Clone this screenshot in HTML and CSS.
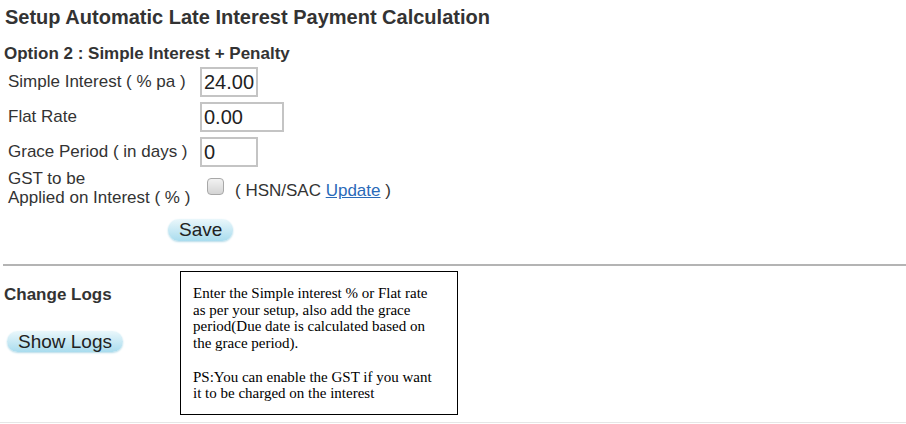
FILE: index.html
```html
<!DOCTYPE html>
<html lang="en">
<head>
    <meta charset="UTF-8">
    <title>Late Interest Setup</title>
    <link rel="stylesheet" href="styles.css">
</head>
<body>
    <div class="page">
        <h2 class="title">Setup Automatic Late Interest Payment Calculation</h2>

        <div class="option-block">
            <h3 class="option-title">Option 2 : Simple Interest + Penalty</h3>
            <div class="form-grid">
                <label class="field-label">Simple Interest ( % pa )</label>
                <div><input class="field small" type="text" value="24.00"></div>

                <label class="field-label">Flat Rate</label>
                <div><input class="field wide" type="text" value="0.00"></div>

                <label class="field-label">Grace Period ( in days )</label>
                <div><input class="field small" type="text" value="0"></div>

                <label class="field-label two-line">GST to be<br>Applied on Interest ( % )</label>
                <div class="gst-row">
                    <span class="check"></span>
                    <span class="hsn">( HSN/SAC <a href="#">Update</a> )</span>
                </div>
            </div>
            <div class="save-row">
                <button class="pill-btn save-btn">Save</button>
            </div>
        </div>

        <hr class="divider">

        <div class="logs">
            <div class="logs-left">
                <h3 class="logs-title">Change Logs</h3>
                <button class="pill-btn logs-btn">Show Logs</button>
            </div>
            <div class="help-box">
                <p>Enter the Simple interest % or Flat rate as per your setup, also add the grace period(Due date is calculated based on the grace period).</p>
                <p>PS:You can enable the GST if you want it to be charged on the interest</p>
            </div>
        </div>
        <div class="bottom-line"></div>
    </div>
</body>
</html>
```

FILE: styles.css
```css
body {
    margin: 0;
    background: #fff;
    color: #333;
    font-family: 'Liberation Sans', Arial, sans-serif;
}
.page {
    width: 906px;
}
.title {
    margin: 0;
    padding: 6px 0 0 5px;
    font-size: 20px;
    font-weight: bold;
    color: #333;
    line-height: 23px;
}
.option-block {
    padding: 15px 0 0 4px;
}
.option-title {
    margin: 0;
    font-size: 17px;
    font-weight: bold;
    line-height: 20px;
}
.form-grid {
    display: grid;
    grid-template-columns: 192px auto;
    row-gap: 5px;
    padding-left: 4px;
    margin-top: 3px;
    align-items: center;
}
.field-label {
    font-size: 17px;
}
.two-line {
    line-height: 19px;
    margin-top: -3px;
}
.field {
    display: block;
    font-family: 'Liberation Sans', Arial, sans-serif;
    font-size: 20px;
    color: #222;
    height: 30px;
    box-sizing: border-box;
    border: 2px solid #c4c4c4;
    padding: 1px 2px;
    margin: 0;
}
.small {
    width: 58px;
}
.wide {
    width: 84px;
}
.gst-row {
    display: flex;
    align-items: center;
    gap: 11px;
    padding-left: 7px;
    font-size: 17px;
}
.check {
    width: 17px;
    height: 17px;
    box-sizing: border-box;
    border: 1px solid #a8a8a8;
    border-radius: 4px;
    background: linear-gradient(#f2f2f2, #d4d4d4);
    margin-top: -7px;
}
.hsn {
    margin-top: 2px;
}
.hsn a {
    color: #2a6ab8;
}
.save-row {
    padding: 12px 0 0 164px;
}
.pill-btn {
    font-family: 'Liberation Sans', Arial, sans-serif;
    color: #222;
    border: none;
    border-radius: 12px;
    background: linear-gradient(#eaf7fb, #a9dcee);
    box-shadow: 0 1px 2px #b6dbe8;
    cursor: pointer;
}
.save-btn {
    font-size: 19px;
    line-height: 22px;
    height: 22px;
    padding: 0 11px;
}
.divider {
    margin: 23px 0 0 3px;
    border: none;
    height: 2px;
    background: #b4b4b4;
}
.logs {
    display: flex;
    padding-top: 5px;
}
.logs-left {
    width: 180px;
}
.logs-title {
    margin: 14px 0 0 4px;
    font-size: 17px;
    font-weight: bold;
    line-height: 20px;
}
.logs-btn {
    margin: 26px 0 0 7px;
    font-size: 19px;
    line-height: 21px;
    height: 21px;
    padding: 0 11px;
}
.help-box {
    width: 240px;
    border: 1px solid #000;
    padding: 13px 24px 12px 12px;
    font-family: 'Liberation Serif', 'Times New Roman', serif;
    font-size: 15px;
    line-height: 16.7px;
    color: #000;
}
.help-box p {
    margin: 0;
}
.help-box p + p {
    margin-top: 16.7px;
}
.bottom-line {
    margin-top: 7px;
    height: 1px;
    background: #e6e6e6;
}
```
